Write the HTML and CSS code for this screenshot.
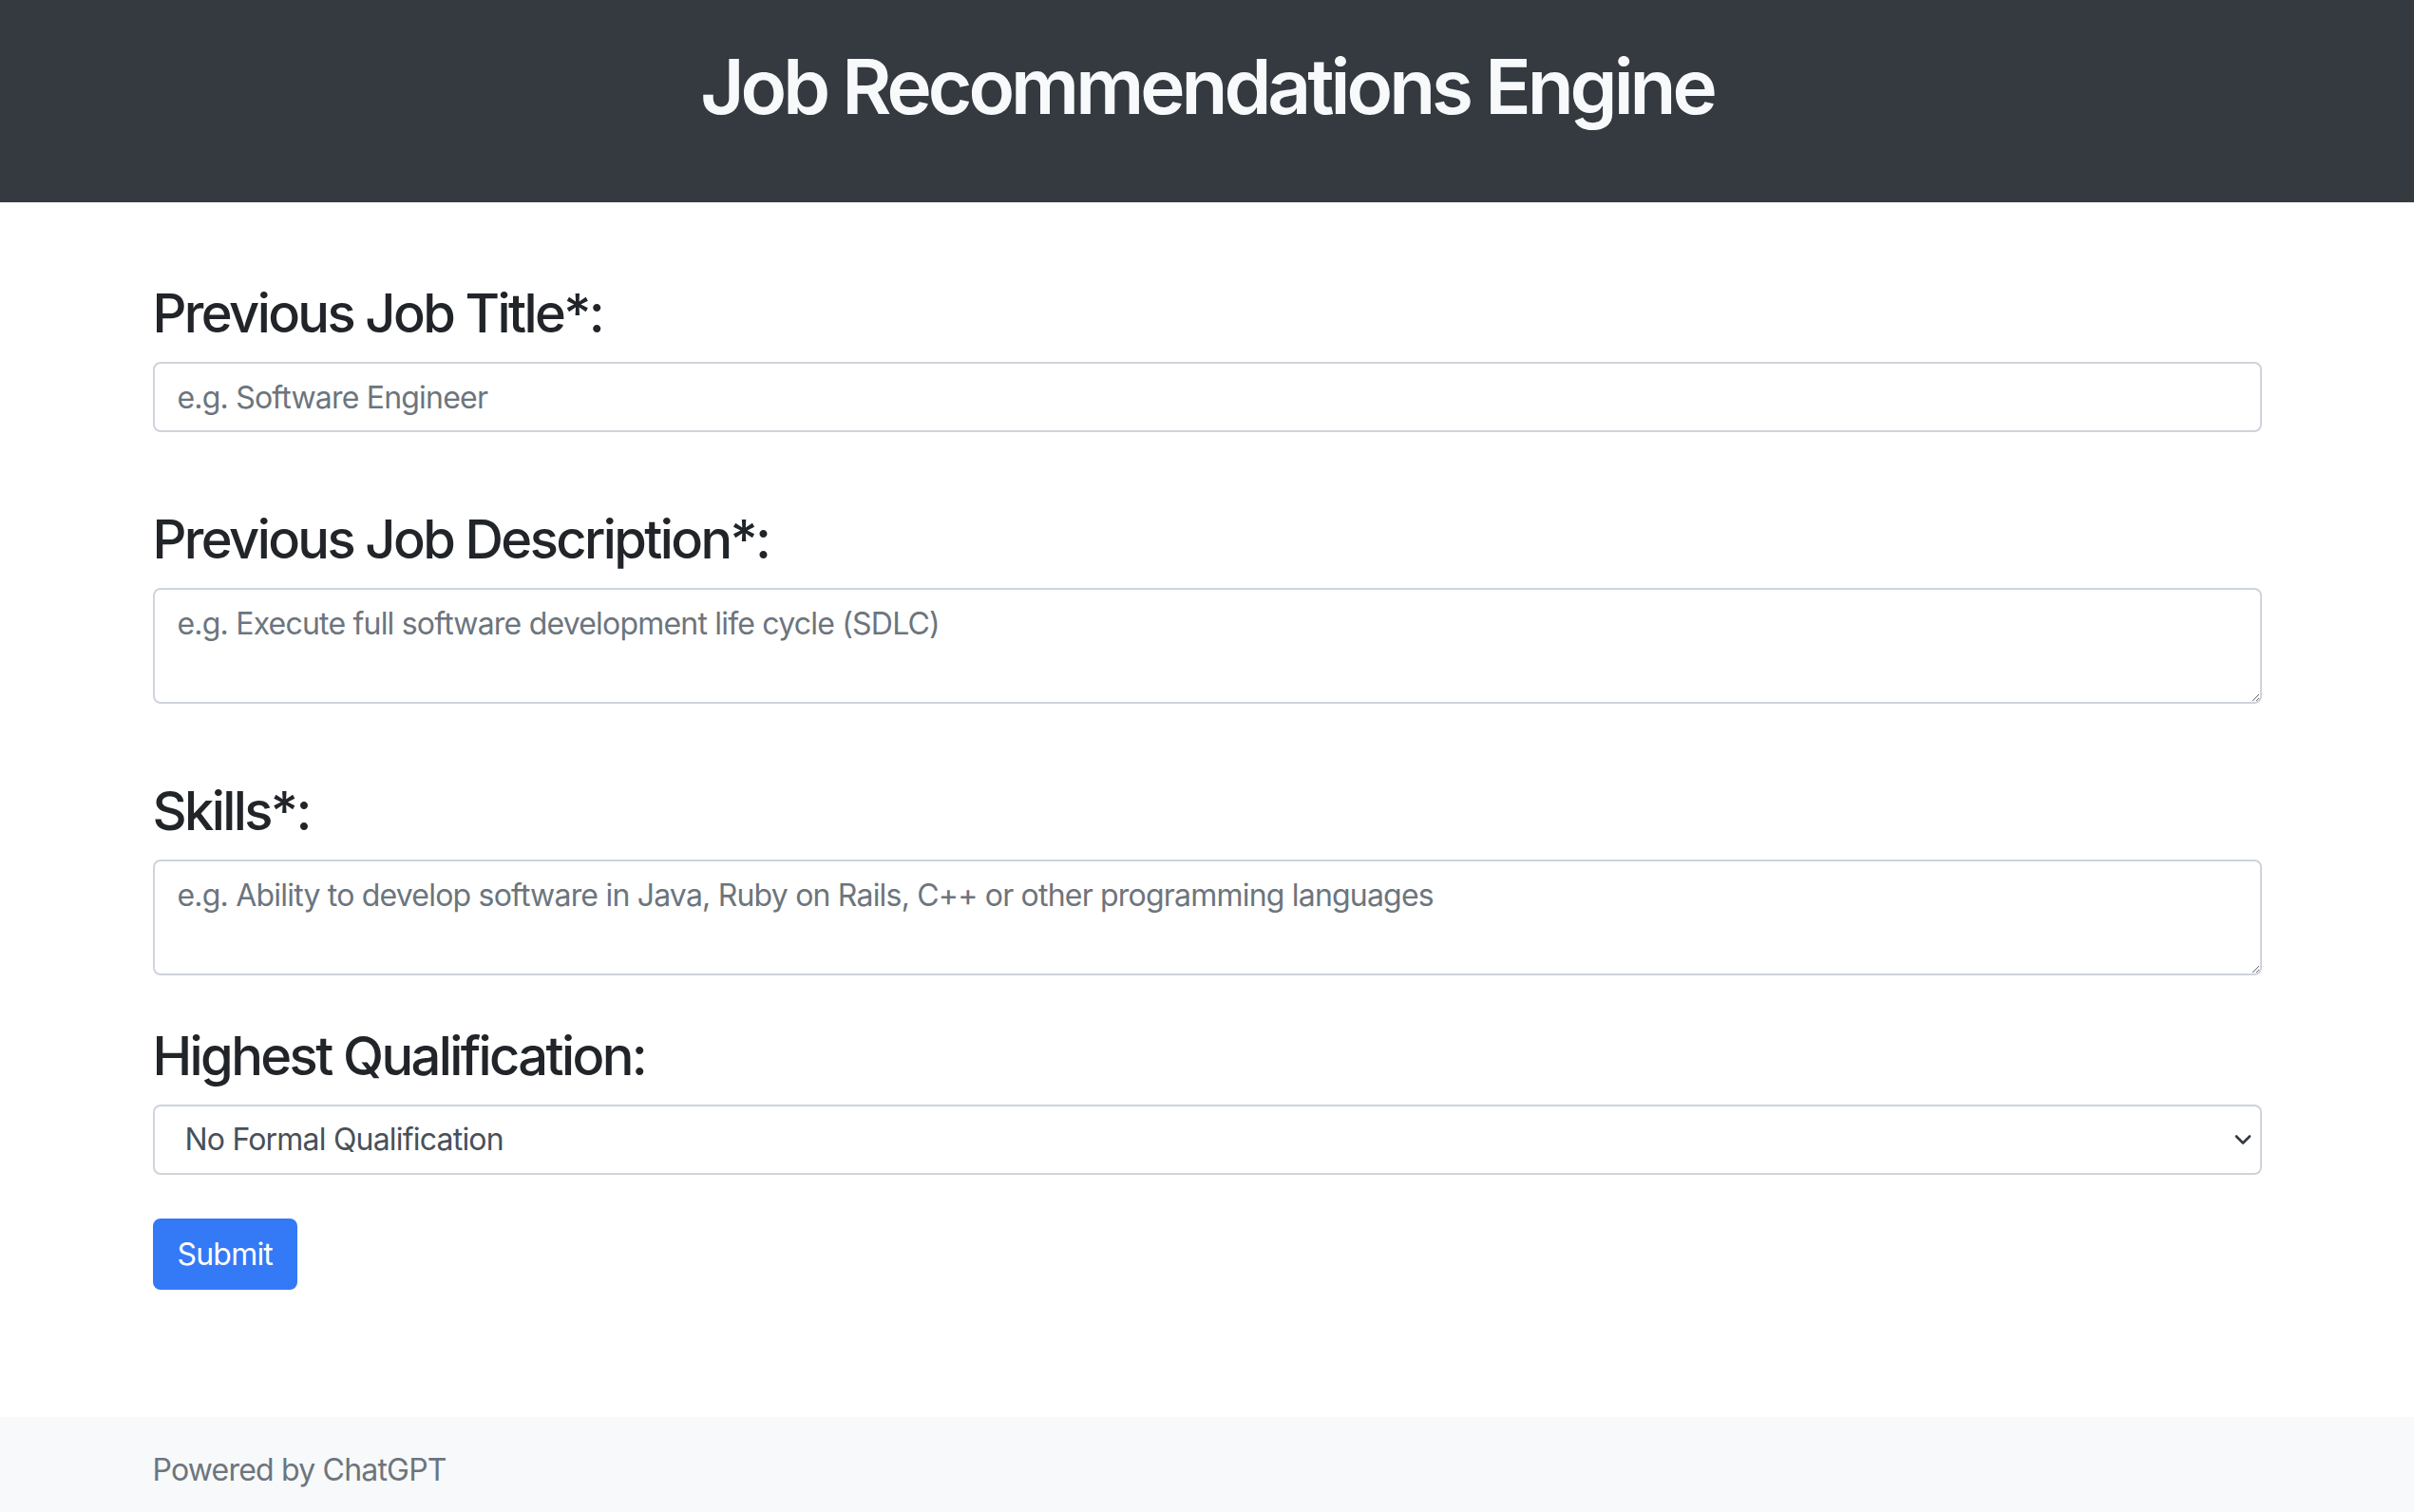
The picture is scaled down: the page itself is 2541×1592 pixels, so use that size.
FILE: index.html
```html
<!DOCTYPE html>
<html>

<head>
    <title>Job Recommendations Engine</title>
    <link rel="stylesheet" href="styles.css">
</head>

<body>
    <header class="site-header">
        <h1 class="site-title">Job Recommendations Engine</h1>
    </header>

    <main class="container page-body">
        <form class="job-form" onsubmit="return false;">
            <div class="form-group">
                <label class="field-label" for="job-title">Previous Job Title*:</label>
                <input type="text" id="job-title" class="form-control" placeholder="e.g. Software Engineer">
            </div>

            <div class="form-group">
                <label class="field-label" for="job-description">Previous Job Description*:</label>
                <textarea id="job-description" class="form-control form-area" rows="2" placeholder="e.g. Execute full software development life cycle (SDLC)"></textarea>
            </div>

            <div class="form-group form-group-short">
                <label class="field-label" for="skills">Skills*:</label>
                <textarea id="skills" class="form-control form-area" rows="2" placeholder="e.g. Ability to develop software in Java, Ruby on Rails, C++ or other programming languages"></textarea>
            </div>

            <div class="form-group form-group-last">
                <label class="field-label" for="qualification">Highest Qualification:</label>
                <div class="select-wrap">
                    <select id="qualification" class="form-control form-select">
                        <option>No Formal Qualification</option>
                        <option>High School</option>
                        <option>Diploma</option>
                        <option>Bachelor's Degree</option>
                        <option>Master's Degree</option>
                        <option>PhD</option>
                    </select>
                    <svg class="select-arrow" width="18" height="12" viewBox="0 0 18 12">
                        <polyline points="2,2.5 9,9.5 16,2.5" fill="none" stroke="#343a40" stroke-width="2.6" stroke-linecap="round" stroke-linejoin="round"/>
                    </svg>
                </div>
            </div>

            <button type="submit" class="btn-submit">Submit</button>
        </form>
    </main>

    <footer class="site-footer">
        <div class="container">
            <span class="footer-text">Powered by ChatGPT</span>
        </div>
    </footer>
</body>
</html>
```

FILE: styles.css
```css
body {
    margin: 0;
    font-family: Inter, "Liberation Sans", sans-serif;
    font-size: 32px;
    line-height: 1.5;
    letter-spacing: -0.8px;
    color: #212529;
    background: #ffffff;
}

.container {
    box-sizing: border-box;
    width: 2280px;
    margin: 0 auto;
    padding: 0 30px;
}

.site-header {
    background: #343a40;
    padding: 43px 0 74px;
    text-align: center;
}

.site-title {
    margin: 0;
    font-size: 80px;
    font-weight: 600;
    line-height: 96px;
    letter-spacing: -4px;
    color: #f8f9fa;
}

.page-body {
    padding-top: 84px;
    padding-bottom: 134px;
}

.form-group {
    margin-bottom: 80px;
}

.form-group-short {
    margin-bottom: 52px;
}

.form-group-last {
    margin-bottom: 46px;
}

.field-label {
    display: block;
    margin-bottom: 17px;
    font-size: 56px;
    font-weight: 550;
    line-height: 67px;
    letter-spacing: -2.6px;
}

.form-control {
    box-sizing: border-box;
    display: block;
    width: 100%;
    height: 74px;
    margin: 0;
    padding: 0 24px;
    font-family: inherit;
    font-size: 32px;
    line-height: 70px;
    letter-spacing: -0.8px;
    color: #495057;
    background: #ffffff;
    border: 2px solid #ced4da;
    border-radius: 8px;
    outline: none;
}

.form-control::placeholder {
    color: #6c757d;
    opacity: 1;
}

.form-area {
    height: 122px;
    padding: 12px 24px;
    line-height: 48px;
    resize: vertical;
}

.select-wrap {
    position: relative;
}

.form-select {
    -webkit-appearance: none;
    appearance: none;
    padding-left: 32px;
    padding-right: 60px;
}

.select-arrow {
    position: absolute;
    right: 11px;
    top: 31px;
    pointer-events: none;
}

.btn-submit {
    display: block;
    box-sizing: border-box;
    height: 75px;
    padding: 0 24px;
    font-family: inherit;
    font-size: 32px;
    line-height: 71px;
    letter-spacing: -0.8px;
    color: #ffffff;
    background: #3479f6;
    border: 2px solid #3479f6;
    border-radius: 8px;
    cursor: pointer;
}

.site-footer {
    background: #f8f9fa;
    padding: 32px 0;
}

.footer-text {
    color: #6c757d;
}
```
